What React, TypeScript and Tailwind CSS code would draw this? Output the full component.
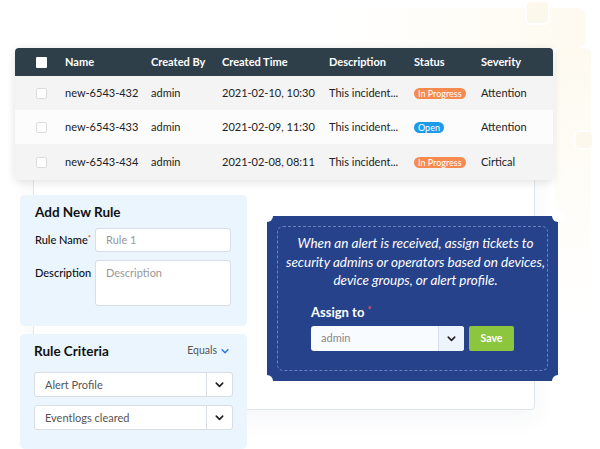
import React from 'react';

const rows = [
  { name: 'new-6543-432', by: 'admin', time: '2021-02-10, 10:30', status: 'In Progress', severity: 'Attention', h: 'h-[34px]' },
  { name: 'new-6543-433', by: 'admin', time: '2021-02-09, 11:30', status: 'Open', severity: 'Attention', h: 'h-[34px]' },
  { name: 'new-6543-434', by: 'admin', time: '2021-02-08, 08:11', status: 'In Progress', severity: 'Cirtical', h: 'h-[36px]' },
];

const Chevron = ({ className = '' }: { className?: string }) => (
  <svg viewBox="0 0 12 12" className={className} fill="none" stroke="currentColor" strokeWidth={1.8} strokeLinecap="round" strokeLinejoin="round">
    <path d="M2.5 4.5 6 8l3.5-3.5" />
  </svg>
);

const StatusBadge = ({ status }: { status: string }) => (
  <span
    className={`inline-block rounded-full px-[4px] text-[9px] leading-[11px] text-white ${
      status === 'Open' ? 'bg-[#1b9be8]' : 'bg-[#f68a4f]'
    }`}
  >
    {status}
  </span>
);

const SelectBox = ({ value }: { value: string }) => (
  <div className="flex h-[25px] w-[199px] rounded-[3px] border border-[#d9dee4] bg-white text-[11px] text-[#555]">
    <div className="flex flex-1 items-center pl-[10px]">{value}</div>
    <div className="flex w-[26px] items-center justify-center border-l border-[#d9dee4] text-[#222]">
      <Chevron className="h-[11px] w-[11px]" />
    </div>
  </div>
);

const App = () => {
  return (
    <div className="relative h-[449px] w-[600px] overflow-hidden bg-white font-['Lato',_'Noto_Sans',_sans-serif]">
      {/* faint background decorations */}
      <div className="absolute left-[332px] top-[8px] h-[40px] w-[253px] rounded-md bg-gradient-to-r from-white to-[#fefaf0]" />
      <div className="absolute left-[525px] top-0 h-[25px] w-[25px] rounded-md border-2 border-white bg-[#fdf8ec]" />
      <div className="absolute left-[555px] top-[48px] h-[280px] w-[36px] rounded-md bg-gradient-to-b from-[#fefaf0] to-white" />
      <div className="absolute left-[574px] top-[130px] h-[20px] w-[20px] rounded-md border-2 border-white bg-[#fdf8ec]" />

      {/* back panel */}
      <div className="absolute left-[33px] top-[160px] h-[250px] w-[502px] rounded-[4px] border border-[#e2e6eb] bg-white shadow-[0_8px_24px_rgba(40,60,90,0.05)]" />

      <div className="relative flex flex-col">
        {/* table */}
        <div className="ml-[15px] mt-[48px] w-[538px] overflow-hidden rounded-[4px] bg-white shadow-[0_2px_10px_rgba(0,0,0,0.12)]">
          <div className="flex h-[28px] items-center bg-[#2f3f4a] text-[11px] font-bold text-white">
            <div className="flex w-[50px] justify-center pl-[2px]">
              <span className="block h-[11px] w-[11px] rounded-[1px] bg-white" />
            </div>
            <div className="w-[86px]">Name</div>
            <div className="w-[71px]">Created By</div>
            <div className="w-[107px]">Created Time</div>
            <div className="w-[85px]">Description</div>
            <div className="w-[67px]">Status</div>
            <div>Severity</div>
          </div>
          {rows.map((r, i) => (
            <div
              key={r.name}
              className={`flex items-center text-[11px] text-[#222] ${r.h} ${i === 1 ? 'bg-[#fcfcfc]' : 'bg-[#f4f4f4]'}`}
            >
              <div className="flex w-[50px] justify-center pl-[2px]">
                <span className="block h-[11px] w-[11px] rounded-[2px] border border-[#dcdcdc] bg-white" />
              </div>
              <div className="w-[86px]">{r.name}</div>
              <div className="w-[71px]">{r.by}</div>
              <div className="w-[107px]">{r.time}</div>
              <div className="w-[85px]">This incident...</div>
              <div className="w-[67px]">
                <StatusBadge status={r.status} />
              </div>
              <div>{r.severity}</div>
            </div>
          ))}
        </div>

        <div className="flex">
          {/* left column */}
          <div className="ml-[20px] mt-[15px] flex w-[227px] flex-col gap-[8px]">
            <div className="h-[131px] rounded-[5px] bg-[#eaf5fe] px-[15px] pt-[7px]">
              <div className="text-[13.5px] font-bold text-[#111]">Add New Rule</div>
              <div className="mt-[6px] flex items-center">
                <div className="w-[60px] text-[11px] font-medium text-[#111]">
                  Rule Name<span className="align-top text-[8px] text-[#e8412c]">*</span>
                </div>
                <div className="flex h-[24px] w-[136px] items-center rounded-[3px] border border-[#d9dee4] bg-white pl-[10px] text-[11px] text-[#999]">
                  Rule 1
                </div>
              </div>
              <div className="mt-[8px] flex items-start">
                <div className="w-[60px] pt-[5px] text-[11px] font-medium text-[#111]">Description</div>
                <div className="h-[46px] w-[136px] rounded-[3px] border border-[#d9dee4] bg-white pl-[10px] pt-[4px] text-[11px] text-[#999]">
                  Description
                </div>
              </div>
            </div>

            <div className="h-[115px] rounded-[5px] bg-[#eaf5fe] px-[14px] pt-[7px]">
              <div className="flex items-center justify-between">
                <div className="text-[13.5px] font-bold text-[#111]">Rule Criteria</div>
                <div className="flex items-center gap-[3px] pr-[3px] text-[10.5px] text-[#555]">
                  Equals
                  <Chevron className="h-[10px] w-[10px] text-[#2b7be8]" />
                </div>
              </div>
              <div className="mt-[11px] flex flex-col gap-[8px]">
                <SelectBox value="Alert Profile" />
                <SelectBox value="Eventlogs cleared" />
              </div>
            </div>
          </div>

          {/* ticket card */}
          <div className="relative ml-[20px] mt-[36px] h-[165px] w-[291px] rounded-[2px] bg-[#26428b] p-[10px]">
            <span className="absolute -left-[6px] -top-[6px] h-[12px] w-[12px] rounded-full bg-white" />
            <span className="absolute -right-[6px] -top-[6px] h-[12px] w-[12px] rounded-full bg-white" />
            <span className="absolute -bottom-[6px] -left-[6px] h-[12px] w-[12px] rounded-full bg-white" />
            <span className="absolute -bottom-[6px] -right-[6px] h-[12px] w-[12px] rounded-full bg-white" />
            <div className="flex h-full flex-col items-center rounded-[6px] border border-dashed border-[#6a82bf] pl-[6px] pt-[7px]">
              <p className="whitespace-nowrap text-center text-[13.5px] italic leading-[18.5px] text-white">
                When an alert is received, assign tickets to
                <br />
                security admins or operators based on devices,
                <br />
                device groups, or alert profile.
              </p>
              <div className="mt-[13px] w-[203px] -translate-x-[3px]">
                <div className="text-[13px] font-bold text-white">
                  Assign to <span className="align-top text-[9px] text-[#ff4b4b]">*</span>
                </div>
                <div className="mt-[4px] flex gap-[5px]">
                  <div className="flex h-[25px] w-[153px] overflow-hidden rounded-[3px] bg-[#f8fbff] text-[11px] text-[#888]">
                    <div className="flex flex-1 items-center pl-[10px]">admin</div>
                    <div className="flex w-[26px] items-center justify-center border-l border-[#d7dfea] bg-[#eef4fd] text-[#222]">
                      <Chevron className="h-[11px] w-[11px]" />
                    </div>
                  </div>
                  <div className="flex h-[25px] w-[45px] items-center justify-center rounded-[2px] bg-[#8cc63e] text-[10.5px] font-bold text-white">
                    Save
                  </div>
                </div>
              </div>
            </div>
          </div>
        </div>
      </div>
    </div>
  );
};

export default App;
